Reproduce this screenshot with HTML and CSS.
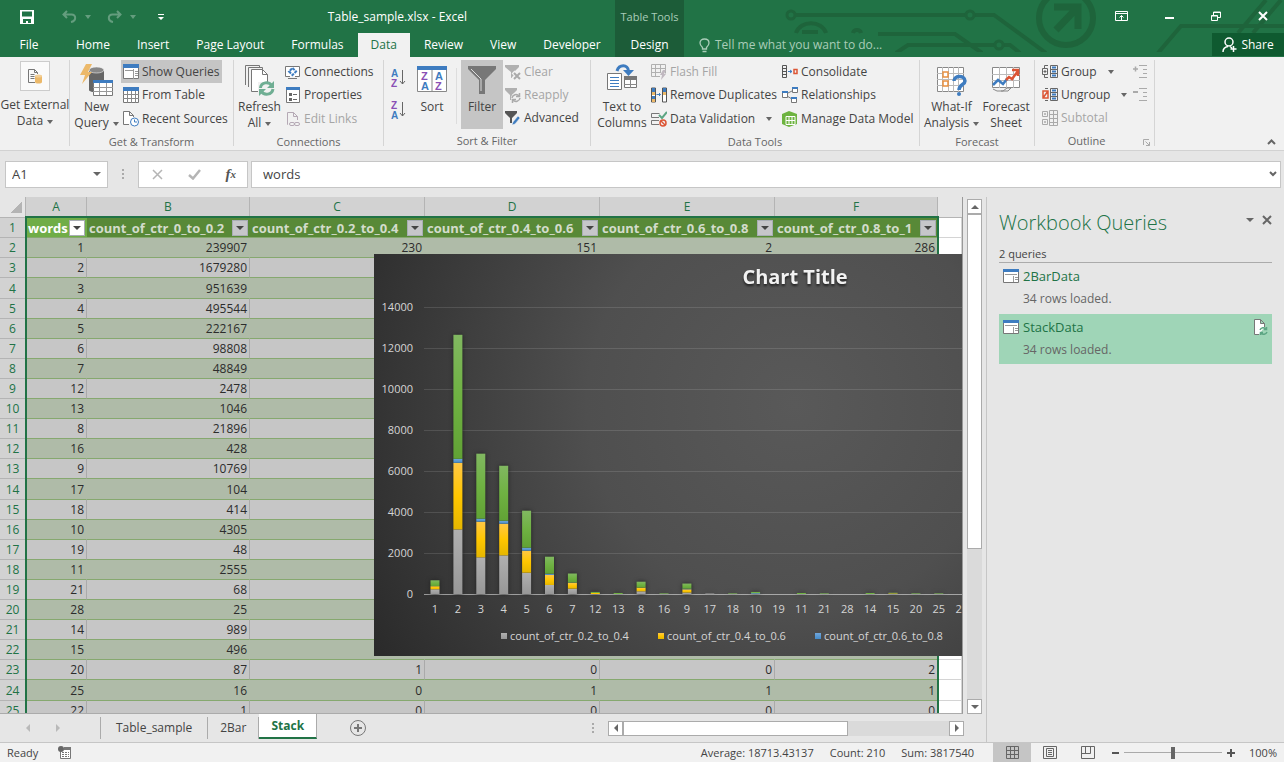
FILE: index.html
```html
<!DOCTYPE html>
<html lang="en">
<head>
    <meta charset="UTF-8">
    <meta name="viewport" content="width=device-width, initial-scale=1.0">
    <title>Table_sample.xlsx - Excel</title>
    <link rel="stylesheet" href="styles.css">
</head>
<body>
    <header class="titlebar">
        <svg class="circuit" width="500" height="52" viewBox="784 0 500 52" fill="none" stroke="#1e643b" stroke-width="4">
            <circle cx="791" cy="15" r="4" stroke-width="3"/>
            <path d="M795 15H966M974 15H994L1046 53M878 34H955L982 53M896 53L908 45H995M1003 45H1010L1020 53M1158 53L1181 26H1284M1238 33L1266 0M1253 33L1281 0"/>
            <path d="M796 33C800 20 822 20 826 33M802 32H818M853 33C854 29 860 29 861 33"/>
            <circle cx="970" cy="15" r="4" stroke-width="3"/>
            <circle cx="999" cy="45" r="4" stroke-width="3"/>
            <circle cx="1066" cy="18" r="27" stroke-width="6"/>
            <path d="M1054 7H1078V29M1077 8L1056 30" stroke-width="7"/>
        </svg>
        <div class="title-left">
            <div class="title-row">
                <div class="quick-access">
                    <button aria-label="Save"><svg width="14" height="14" viewBox="0 0 14 14"><path d="M0 0h14v14H0z" fill="#fff"/><path d="M2 1.500h10v5H2zM3 9h8v4H8v-2H6v2H3z" fill="#217346"/></svg></button>
                    <button class="faded" aria-label="Undo"><svg width="15" height="13" viewBox="0 0 15 13" fill="none" stroke="#fff" stroke-width="2"><path d="M5 1L1.500 4.500L5 8M2 4.500H9.500C14.500 4.500 14.500 11 9 12"/></svg><span class="caret"></span></button>
                    <button class="faded" aria-label="Redo"><svg width="15" height="13" viewBox="0 0 15 13" fill="none" stroke="#fff" stroke-width="2"><path d="M10 1L13.500 4.500L10 8M13 4.500H5.500C.5 4.500 .5 11 6 12"/></svg><span class="caret"></span></button>
                    <button aria-label="Customize toolbar"><svg width="6" height="6" viewBox="0 0 6 6"><path d="M0 0h6v1H0zM0 3h6L3 6z" fill="#fff"/></svg></button>
                </div>
                <div class="doc-title">Table_sample.xlsx - Excel</div>
            </div>
            <nav class="tabs">
                <button class="file">File</button>
                <button>Home</button>
                <button>Insert</button>
                <button>Page Layout</button>
                <button>Formulas</button>
                <button class="active">Data</button>
                <button>Review</button>
                <button>View</button>
                <button>Developer</button>
            </nav>
        </div>
        <div class="context">
            <div class="context-name">Table Tools</div>
            <button>Design</button>
        </div>
        <div class="title-right">
            <div class="window-buttons">
                <button aria-label="Ribbon display options"><svg width="13" height="10" viewBox="0 0 13 10" fill="none" stroke="#fff"><path d="M.5 .5h12v9H.5zM1 2.500h11M6.500 9V4.500M4.500 6.500l2-2 2 2"/></svg></button>
                <button aria-label="Minimize"><svg width="9" height="10" viewBox="0 0 9 10"><path d="M0 6h9v2H0z" fill="#fff"/></svg></button>
                <button aria-label="Restore"><svg width="10" height="10" viewBox="0 0 10 10" fill="none" stroke="#fff"><path d="M.5 4.500h6v5h-6zM.5 5h6M2.500 4V1h7v5.500H7M2.500 1.500h7"/></svg></button>
                <button aria-label="Close"><svg width="10" height="10" viewBox="0 0 10 10" stroke="#fff" stroke-width="2"><path d="M1 1l8 8M9 1L1 9"/></svg></button>
            </div>
            <div class="tell-row">
                <button class="tell"><svg width="11" height="15" viewBox="0 0 11 15" fill="none" stroke="#a9cdb8" stroke-width="1.300"><path d="M3.500 11V9.500C2 8 1 7 1 5C1 2.500 3 1 5.500 1S10 2.500 10 5C10 7 9 8 7.500 9.500V11zM3.500 13.500h4"/></svg>Tell me what you want to do...</button>
                <button class="share"><svg width="15" height="16" viewBox="0 0 15 16" fill="none" stroke="#fff" stroke-width="1.500"><circle cx="7" cy="5" r="4"/><path d="M1 15C1 11.500 3 10 6 9.500M8 9.500L10 11M11.500 9v6M8.500 12h6"/></svg>Share</button>
            </div>
        </div>
    </header>

    <section class="ribbon">
        <div class="group external">
            <div class="controls">
                <button class="big">
                    <span class="framed"><svg width="16" height="16" viewBox="0 0 16 16" fill="none" stroke="#777"><path d="M8 14.500H1.500v-13h6l3 3V6M7.500 1.500v3h3M3.500 6.500h4M3.500 8.500h4M3.500 10.500h4"/><path d="M8 8v6c0 2 7 2 7 0V8" fill="#ecb96a" stroke="none"/><ellipse cx="11.500" cy="8" rx="3.500" ry="1.500" fill="#f3cf96" stroke="none"/></svg></span>
                    <span>Get External<br>Data<i class="caret"></i></span>
                </button>
            </div>
            <div class="group-name"></div>
        </div>
        <div class="group transform">
            <div class="controls">
                <button class="big">
                    <svg width="34" height="34" viewBox="0 0 34 34"><path d="M9 8v19c0 3 15 3 15 0V8z" fill="#666"/><ellipse cx="16.500" cy="7" rx="7.500" ry="3" fill="#888" stroke="#f1f1f1" stroke-width=".6"/><path d="M6 1h6L8 9h4L2 21l3-9H0z" fill="#ecb96a"/><path d="M13.500 17.500h19v15h-19z" fill="#fff" stroke="#777"/><path d="M13 17h20v3H13z" fill="#3e7cc0"/><path d="M13 24.500h20M13 28.500h20M19.500 20v12M26.500 20v12" stroke="#999"/></svg>
                    <span>New<br>Query<i class="caret"></i></span>
                </button>
                <div class="stack">
                    <button class="small on"><svg width="16" height="16" viewBox="0 0 16 16"><path d="M.5 .5h15v14H.5z" fill="#fff" stroke="#777"/><path d="M0 0h16v4H0z" fill="#3e7cc0"/><path d="M2 6.500h8M10.500 5v10M12 7.500h3M12 9.500h3M12 11.500h3" stroke="#999"/></svg>Show Queries</button>
                    <button class="small"><svg width="16" height="16" viewBox="0 0 16 16"><path d="M.5 .5h15v15H.5z" fill="#fff" stroke="#777"/><path d="M0 0h16v4H0z" fill="#3e7cc0"/><path d="M0 7.500h16M0 11.500h16M4.500 4v12M8.500 4v12M12.500 4v12" stroke="#888"/></svg>From Table</button>
                    <button class="small"><svg width="16" height="16" viewBox="0 0 16 16" fill="none" stroke="#777"><path d="M6 13.500H.5V.5h6l4 4V6M6.500 .5v4h4" fill="#fff"/><circle cx="11.500" cy="11" r="4" fill="#fff" stroke="#3e7cc0"/><path d="M11.500 8.500V11H14" stroke="#3e7cc0"/></svg>Recent Sources</button>
                </div>
            </div>
            <div class="group-name">Get &amp; Transform</div>
        </div>
        <div class="group connections">
            <div class="controls">
                <button class="big">
                    <svg width="30" height="34" viewBox="0 0 30 34" fill="#fff" stroke="#777"><path d="M.5 22V2.500h14V5M3.500 24V4.500h14V7" fill="none"/><path d="M6.500 6.500h11l5 5V28.500h-16z"/><path d="M17.500 6.500v5h5" fill="none"/><path d="M13 19h16v14H13z" fill="#f1f1f1" stroke="none"/><path d="M15.500 25C16 19 24 18 27 23M28 26C27 32 19 33 16 28" fill="none" stroke="#6fae93" stroke-width="3"/><path d="M29 18v7h-7zM14 33v-7h7z" fill="#6fae93" stroke="none"/></svg>
                    <span>Refresh<br>All<i class="caret"></i></span>
                </button>
                <div class="stack">
                    <button class="small"><svg width="16" height="16" viewBox="0 0 16 16" fill="none" stroke="#777"><path d="M5 12.500H.5v-10h14v10H10M3 14.500h9" fill="#fff"/><path d="M7.500 4l3.500 3.500L7.500 11 4 7.500z" stroke="#3e7cc0" stroke-width="2" stroke-dasharray="3 1"/></svg>Connections</button>
                    <button class="small"><svg width="16" height="16" viewBox="0 0 16 16"><path d="M1.500 1.500h13v14h-13z" fill="#fff" stroke="#777"/><path d="M1 0h14v3H1z" fill="#3e7cc0"/><path d="M4 6h3v3H4zM4 11h3v3H4zM8 7h4v1H8zM8 12h4v1H8z" fill="#666"/></svg>Properties</button>
                    <button class="small" disabled><svg width="16" height="16" viewBox="0 0 16 16" fill="none" stroke="#b5a9b5"><path d="M3 13.500H2.500V1.500h6l4 4V9M8.500 1.500v4h4"/><rect x="4.500" y="11.500" width="5" height="3" rx="1.500"/><rect x="9.500" y="11.500" width="5" height="3" rx="1.500"/></svg>Edit Links</button>
                </div>
            </div>
            <div class="group-name">Connections</div>
        </div>
        <div class="group sortfilter">
            <div class="controls">
                <div class="az">
                    <button aria-label="Sort A to Z"><svg width="15" height="22" viewBox="0 0 15 22"><text x="0" y="10" fill="#3e7cc0">A</text><text x="0" y="20" fill="#8a4fb5">Z</text><path d="M11.500 3v14M9 14l2.500 3 2.500-3" fill="none" stroke="#666"/></svg></button>
                    <button aria-label="Sort Z to A"><svg width="15" height="22" viewBox="0 0 15 22"><text x="0" y="10" fill="#8a4fb5">Z</text><text x="0" y="20" fill="#3e7cc0">A</text><path d="M11.500 3v14M9 14l2.500 3 2.500-3" fill="none" stroke="#666"/></svg></button>
                </div>
                <button class="big sort">
                    <svg width="30" height="34" viewBox="0 0 30 34"><path d="M.5 4h29v24.500H.5z" fill="#fff" stroke="#888"/><path d="M0 3h30v4H0z" fill="#3e7cc0"/><path d="M15 7v21" stroke="#888"/><text x="4" y="17" fill="#8a4fb5">Z</text><text x="4" y="27" fill="#3e7cc0">A</text><text x="18" y="17" fill="#3e7cc0">A</text><text x="18" y="27" fill="#8a4fb5">Z</text></svg>
                    <span>Sort</span>
                </button>
                <div class="divider"></div>
                <button class="big filter on">
                    <svg width="28" height="34" viewBox="0 0 28 34"><path d="M0 3h28v3L17 17v14h-6V17L0 6z" fill="#777"/><path d="M3 6l10 10v12" fill="none" stroke="#ddd"/></svg>
                    <span>Filter</span>
                </button>
                <div class="stack">
                    <button class="small" disabled><svg width="16" height="16" viewBox="0 0 16 16"><path d="M0 1h14v2L9 8v6H6V8L0 3z" fill="#b0b0b0"/><path d="M8 8l7 7M15 8l-7 7" stroke="#f1f1f1" stroke-width="4"/><path d="M9 9l6 6M15 9l-6 6" stroke="#aaa" stroke-width="2"/></svg>Clear</button>
                    <button class="small" disabled><svg width="16" height="16" viewBox="0 0 16 16"><path d="M0 1h12v2L7 8v5H5V8L0 3z" fill="#b0b0b0"/><circle cx="11" cy="11" r="5" fill="#f1f1f1"/><path d="M7 11a4 4 0 0 1 7-2M15 11a4 4 0 0 1-7 2M14.500 6v3.500H11M7.500 16v-3.500H11" fill="none" stroke="#aaa" stroke-width="1.500"/></svg>Reapply</button>
                    <button class="small"><svg width="16" height="16" viewBox="0 0 16 16"><path d="M0 1h12v2L7 8v5H5V8L0 3z" fill="#555"/><path d="M7 15l1-3 5-6 2 2-5 6z" fill="#3e7cc0" stroke="#f1f1f1" stroke-width=".5"/></svg>Advanced</button>
                </div>
            </div>
            <div class="group-name">Sort &amp; Filter</div>
        </div>
        <div class="group datatools">
            <div class="controls">
                <button class="big columns">
                    <svg width="30" height="34" viewBox="0 0 30 34"><path d="M.5 10.500h14v16H.5z" fill="#fff" stroke="#777"/><path d="M3 14.500h9M3 17.500h9M3 20.500h9M3 23.500h9" stroke="#3e7cc0"/><path d="M17.500 15.500h12v9h-12z" fill="#fff" stroke="#777"/><path d="M17 13h13v4H17z" fill="#777"/><path d="M23.500 17v8M17 21.500h13" stroke="#888"/><path d="M10 8C12 1 21 1 21.500 8" fill="none" stroke="#3e7cc0" stroke-width="3"/><path d="M16 7h11l-5.500 6z" fill="#3e7cc0"/></svg>
                    <span>Text to<br>Columns</span>
                </button>
                <div class="stack wide">
                    <button class="small" disabled><svg width="16" height="16" viewBox="0 0 16 16" fill="none" stroke="#b0b0b0"><path d="M.5 .5h14v9M.5 .5v12H9M0 4.500h15M0 8.500h10M4.500 0v13M9.500 0v8"/><path d="M12 6h3l-2 4h2l-5 6 1-5H9z" fill="#c0b8c0" stroke="none"/></svg>Flash Fill</button>
                    <button class="small"><svg width="16" height="16" viewBox="0 0 16 16"><path d="M.5 1v14h4V1zM11.500 1v14h4V1z" fill="#fff" stroke="#555"/><path d="M1 1h3v4H1zM12 1h3v4h-3zM1 9h3v3H1z" fill="#3e7cc0"/><path d="M1 5h3v3H1zM12 5h3v3h-3zM1 12h3v3H1z" fill="#ecb96a"/><path d="M5.500 7.500h4M8 6l1.500 1.500L8 9" stroke="#3e7cc0" fill="none"/></svg>Remove Duplicates</button>
                    <button class="small"><svg width="16" height="16" viewBox="0 0 16 16" fill="none" stroke="#777"><path d="M8 6.500H.5v-4h8M8 13.500H.5v-4H8"/><path d="M8 4l3 3 5-6" stroke="#5ca583" stroke-width="2"/><circle cx="12" cy="12" r="3" stroke="#dc5535" stroke-width="1.500"/><path d="M10 10l4 4" stroke="#dc5535" stroke-width="1.500"/></svg>Data Validation<i class="caret far"></i></button>
                </div>
                <div class="stack">
                    <button class="small"><svg width="16" height="16" viewBox="0 0 16 16" fill="none"><path d="M.5 1.500h4v12h-4zM0 4.500h5M0 7.500h5M0 10.500h5" stroke="#555"/><path d="M6 7.500h4M8 6l2 1.500L8 9" stroke="#3e7cc0"/><path d="M12 5.500h3v4h-3z" stroke="#dc5535" stroke-width="1.500"/></svg>Consolidate</button>
                    <button class="small"><svg width="16" height="16" viewBox="0 0 16 16" fill="#fff" stroke="#777"><path d="M5 6.500L11 3.500M5 9l5 3" fill="none"/><path d="M.5 5.500h5v5h-5zM10.500 .5h5v5h-5zM9.500 10.500h5v5h-5z"/><path d="M0 4h6v2H0zM10 0h6v2h-6zM9 10h6v2H9z" fill="#3e7cc0" stroke="none"/></svg>Relationships</button>
                    <button class="small"><svg width="16" height="16" viewBox="0 0 16 16"><path d="M0 3l7-3 8 3v10l-8 3-7-3z" fill="#6db33f"/><path d="M4 5.500h9v8H4zM4 9.500h9M7 5v9M10 5v9" fill="none" stroke="#fff"/></svg>Manage Data Model</button>
                </div>
            </div>
            <div class="group-name">Data Tools</div>
        </div>
        <div class="group forecast">
            <div class="controls">
                <button class="big">
                    <svg width="30" height="34" viewBox="0 0 30 34"><path d="M.5 4.500h26v24H.5z" fill="#fff" stroke="#888"/><path d="M0 10.500h27M0 16.500h27M0 22.500h27M5.500 4v25M11.500 4v25M16.500 4v25M21.500 4v25" stroke="#bbb"/><path d="M6 9h5v5H6zM6 18h5v5H6z" fill="#fff" stroke="#e89040" stroke-width="1.500"/><path d="M17 18C17 12 28 12 28 18C28 22 22 21 22 27" fill="none" stroke="#3e7cc0" stroke-width="3.500"/><circle cx="22" cy="31" r="2" fill="#3e7cc0"/></svg>
                    <span>What-If<br>Analysis<i class="caret"></i></span>
                </button>
                <button class="big">
                    <svg width="30" height="34" viewBox="0 0 30 34" fill="none"><path d="M1.500 4.500h27v20h-27z" fill="#fff" stroke="#888"/><path d="M1 11.500h28M1 17.500h28M8.500 4v21M15.500 4v21M22.500 4v21" stroke="#bbb"/><path d="M2 26l4 2h6l4-3h4l-3 3h-7" stroke="#888"/><path d="M2 22l5-5 5 4 4-5" stroke="#3e7cc0" stroke-width="2.500"/><path d="M15 17l3-3 3 2 6-8M21 7h6v6" stroke="#dc5535" stroke-width="2.500"/></svg>
                    <span>Forecast<br>Sheet</span>
                </button>
            </div>
            <div class="group-name">Forecast</div>
        </div>
        <div class="group outline">
            <div class="controls">
                <div class="stack">
                    <button class="small"><svg width="16" height="16" viewBox="0 0 16 16" fill="none" stroke="#666"><path d="M6 1.500H2.500V4M6 13.500H2.500V11M.5 4.500h5v6h-5zM1.500 7.500h3M3 6v3M8.500 1.500h7v12h-7z"/><path d="M10 3.500h4M10 7.500h4M10 11.500h4" stroke="#3e7cc0" stroke-width="2"/><path d="M8 5.500h8M8 9.500h8"/></svg>Group<i class="caret far"></i></button>
                    <button class="small"><svg width="16" height="16" viewBox="0 0 16 16" fill="none" stroke="#666"><path d="M3 1.500h3M3 13.500h3M8.500 1.500h7v12h-7z"/><path d="M1 4h5v7H1zM1 11l5-7" stroke="#dc5535" stroke-width="1.500"/><path d="M10 3.500h4M10 7.500h4M10 11.500h4" stroke="#3e7cc0" stroke-width="2"/><path d="M8 5.500h8M8 9.500h8"/></svg>Ungroup<i class="caret far"></i></button>
                    <button class="small" disabled><svg width="16" height="16" viewBox="0 0 16 16" fill="none" stroke="#aaa"><path d="M.5 1.500h5v5h-5zM.5 9.500h5v5h-5zM2 4h2M3 3v2M2 12h2M3 11v2M7.500 .5h8v15h-8zM7 4.500h9M7 8.500h9M7 12.500h9M11.500 0v16"/></svg>Subtotal</button>
                </div>
                <div class="stack details">
                    <button class="small" disabled aria-label="Show Detail"><svg width="16" height="16" viewBox="0 0 16 16" stroke="#aaa"><path d="M1 5h5M3.500 2.500v5" stroke-width="1.500"/><path d="M7 1.500h8M11 5.500h4M11 9.500h4M7 13.500h8"/></svg></button>
                    <button class="small" disabled aria-label="Hide Detail"><svg width="16" height="16" viewBox="0 0 16 16" stroke="#aaa"><path d="M1 5h5" stroke-width="2"/><path d="M7 1.500h8M11 5.500h4M11 9.500h4M7 13.500h8"/></svg></button>
                </div>
            </div>
            <div class="group-name">Outline<button class="launcher" aria-label="Outline settings"><svg width="7" height="7" viewBox="0 0 7 7" fill="none" stroke="#aaa"><path d="M.5 6V.5H6M2.500 2.500l4 4M6.500 3v3.500H3"/></svg></button></div>
        </div>
        <button class="collapse" aria-label="Collapse the ribbon"><svg width="9" height="6" viewBox="0 0 9 6" fill="none" stroke="#666" stroke-width="2"><path d="M1 5l3.500-3.500L8 5"/></svg></button>
    </section>

    <section class="formula-bar">
        <div class="name-box"><input type="text" value="A1" aria-label="Name box"><button aria-label="Names"><i class="caret"></i></button></div>
        <span class="grip"></span>
        <div class="formula-buttons">
            <button aria-label="Cancel"><svg width="11" height="11" viewBox="0 0 11 11" stroke="#b5b5b5" stroke-width="1.500"><path d="M1 1l9 9M10 1l-9 9"/></svg></button>
            <button aria-label="Enter"><svg width="13" height="11" viewBox="0 0 13 11" fill="none" stroke="#b5b5b5" stroke-width="2.500"><path d="M1 6l4 3.500L12 1"/></svg></button>
            <button class="fx" aria-label="Insert function">f<sub>x</sub></button>
        </div>
        <div class="formula"><input type="text" value="words" aria-label="Formula"><button aria-label="Expand"><svg width="8" height="6" viewBox="0 0 8 6" fill="none" stroke="#666" stroke-width="2"><path d="M1 1l3 3 3-3"/></svg></button></div>
    </section>

    <main class="workspace">
        <div class="book">
            <div class="sheet-area">
                <div class="sheet">
                    <table class="grid">
                        <colgroup><col class="c-row"><col class="c-a"><col class="c-b"><col class="c-c"><col class="c-c"><col class="c-c"><col class="c-b"><col></colgroup>
                        <thead>
                            <tr><th class="corner"></th><th>A</th><th>B</th><th>C</th><th>D</th><th>E</th><th>F</th><th class="rest"></th></tr>
                        </thead>
                        <tbody id="rows"></tbody>
                    </table>
                    <div class="selection"></div>
                    <svg class="chart" id="chart" width="842" height="402" viewBox="0 0 842 402">
                        <defs>
                            <radialGradient id="back" gradientUnits="userSpaceOnUse" cx="421" cy="150" r="520">
                                <stop offset="0" stop-color="#595959"/>
                                <stop offset="0.4" stop-color="#4f4f4f"/>
                                <stop offset="1" stop-color="#262626"/>
                            </radialGradient>
                            <linearGradient id="s0" x2="0" y2="1"><stop stop-color="#b0b0b0"/><stop offset="1" stop-color="#979797"/></linearGradient>
                            <linearGradient id="s1" x2="0" y2="1"><stop stop-color="#ffc746"/><stop offset=".5" stop-color="#ffc600"/><stop offset="1" stop-color="#e5b600"/></linearGradient>
                            <linearGradient id="s2" x2="0" y2="1"><stop stop-color="#71a6db"/><stop offset="1" stop-color="#438ac9"/></linearGradient>
                            <linearGradient id="s3" x2="0" y2="1"><stop stop-color="#81b861"/><stop offset=".5" stop-color="#6fb242"/><stop offset="1" stop-color="#61a235"/></linearGradient>
                        </defs>
                        <rect width="842" height="402" fill="url(#back)"/>
                        <text class="chart-title" x="421" y="30">Chart Title</text>
                    </svg>
                </div>
                <div class="vscroll">
                    <button aria-label="Scroll up"><i class="up"></i></button>
                    <div class="track"><div class="thumb"></div></div>
                    <button aria-label="Scroll down"><i class="down"></i></button>
                </div>
            </div>
            <div class="sheet-tabs">
                <div class="tab-nav"><button aria-label="Previous sheet"><i class="left"></i></button><button aria-label="Next sheet"><i class="right"></i></button></div>
                <button class="sheet-tab first">Table_sample</button>
                <button class="sheet-tab">2Bar</button>
                <button class="sheet-tab current">Stack</button>
                <button class="add" aria-label="New sheet"><svg width="16" height="16" viewBox="0 0 16 16" fill="none" stroke="#777"><circle cx="8" cy="8" r="7.500"/><path d="M4 8h8M8 4v8" stroke-width="2"/></svg></button>
                <span class="grip"></span>
                <div class="hscroll">
                    <button aria-label="Scroll left"><i class="left"></i></button>
                    <div class="track"><div class="thumb"></div></div>
                    <button aria-label="Scroll right"><i class="right"></i></button>
                </div>
            </div>
        </div>
        <aside class="queries">
            <div class="pane-head">
                <h2>Workbook Queries</h2>
                <button aria-label="Pane options"><i class="caret"></i></button>
                <button aria-label="Close pane"><svg width="10" height="10" viewBox="0 0 10 10" stroke="#666" stroke-width="2"><path d="M1 1l8 8M9 1L1 9"/></svg></button>
            </div>
            <div class="count">2 queries</div>
            <div class="query">
                <svg width="16" height="16" viewBox="0 0 16 16"><path d="M.5 1.500h15v13H.5z" fill="#fff" stroke="#777"/><path d="M0 1h16v3H0z" fill="#3e7cc0"/><path d="M2 6.500h12M10.500 8v6M12 9.500h3M12 11.500h3" stroke="#999"/></svg>
                <div><a href="#">2BarData</a><p>34 rows loaded.</p></div>
            </div>
            <div class="query chosen">
                <svg width="16" height="16" viewBox="0 0 16 16"><path d="M.5 1.500h15v13H.5z" fill="#fff" stroke="#777"/><path d="M0 1h16v3H0z" fill="#3e7cc0"/><path d="M2 6.500h12M10.500 8v6M12 9.500h3M12 11.500h3" stroke="#999"/></svg>
                <div><a href="#">StackData</a><p>34 rows loaded.</p></div>
                <button aria-label="Refresh"><svg width="15" height="17" viewBox="0 0 15 17" fill="none" stroke="#777"><path d="M6 15.500H1.500V.5h6l4 4V8M7.500 .5v4h4" fill="#fff"/><path d="M7 11a3.500 3.500 0 0 1 6-1M14 13a3.500 3.500 0 0 1-6 1M13.500 8v2.500H11M7.500 16v-2.500H10" stroke="#5ca583" stroke-width="1.500"/></svg></button>
            </div>
        </aside>
    </main>

    <footer class="status">
        <span>Ready</span>
        <svg class="macro" width="14" height="13" viewBox="0 0 14 13"><path d="M2.500 5v7.500h10v-10H6" fill="#fff" stroke="#777"/><path d="M6 1h7v3H6z" fill="#777"/><circle cx="3" cy="3" r="3" fill="#666"/><path d="M4 6.500h7M4 8.500h7M4 10.500h7" stroke="#777" stroke-dasharray="2 1"/></svg>
        <span class="sums"><span>Average: 18713.43137</span><span>Count: 210</span><span>Sum: 3817540</span></span>
        <button class="view on" aria-label="Normal"><svg width="13" height="13" viewBox="0 0 13 13" fill="none" stroke="#666"><path d="M.5 .5h12v12H.5zM0 4.500h13M0 8.500h13M4.500 0v13M8.500 0v13"/></svg></button>
        <button class="view" aria-label="Page layout"><svg width="14" height="13" viewBox="0 0 14 13" fill="none" stroke="#666"><path d="M.5 .5h13v12H.5zM3.500 2.500h7v8h-7zM5 4.500h4M5 6.500h4M5 8.500h4"/></svg></button>
        <button class="view" aria-label="Page break"><svg width="14" height="13" viewBox="0 0 14 13" fill="none" stroke="#666"><path d="M.5 .5h13v12H.5zM4.500 1v6.500h5V1M1 7.500h4" /></svg></button>
        <button class="zoom" aria-label="Zoom out"><svg width="7" height="7" viewBox="0 0 7 7"><path d="M0 3h7v2H0z" fill="#555"/></svg></button>
        <input type="range" min="0" max="100" value="50" aria-label="Zoom">
        <button class="zoom" aria-label="Zoom in"><svg width="8" height="8" viewBox="0 0 8 8"><path d="M0 3h8v2H0zM3 0h2v8H3z" fill="#555"/></svg></button>
        <span class="percent">100%</span>
    </footer>
    <script src="script.js"></script>
</body>
</html>
```
FILE: styles.css
```css
* {
    box-sizing: border-box;
}
body {
    margin: 0;
    height: 100vh;
    display: flex;
    flex-direction: column;
    overflow: hidden;
    background-color: #e6e6e6;
    color: #444;
    font-family: 'Open Sans', 'Noto Sans', sans-serif;
    font-size: 12px;
    line-height: 16px;
    white-space: nowrap;
}
button {
    display: flex;
    align-items: center;
    justify-content: center;
    border: none;
    background: none;
    padding: 0;
    margin: 0;
    font: inherit;
    color: inherit;
}
svg {
    display: block;
    flex: none;
}
.caret {
    display: inline-block;
    border: 3px solid transparent;
    border-top: 4px solid #666;
    border-bottom: none;
    margin-left: 4px;
    vertical-align: middle;
}
.caret.far {
    margin-left: 8px;
}

/* title bar and tabs */
.titlebar {
    position: relative;
    flex: none;
    display: flex;
    height: 57px;
    background-color: #217346;
    color: #fff;
}
.circuit {
    position: absolute;
    top: 0;
    right: 0;
}
.title-left {
    width: 615px;
}
.title-row {
    display: flex;
    align-items: center;
    height: 33px;
}
.quick-access {
    display: flex;
    align-items: center;
    gap: 16px;
    height: 28px;
    padding-left: 20px;
}
.quick-access button:nth-child(2) {
    margin-left: 12px;
}
.quick-access button:last-child {
    margin-left: 6px;
}
.quick-access .caret {
    margin-left: 8px;
    border-top-color: #fff;
}
.faded {
    opacity: 0.3;
}
.doc-title {
    flex: 1;
    padding-left: 16px;
    text-align: center;
}
.tabs {
    display: flex;
    gap: 1px;
    height: 24px;
}
.tabs button {
    padding: 0 13px;
}
.tabs .file {
    width: 62px;
    padding: 0 4px 0 0;
}
.tabs .active {
    background-color: #f1f1f1;
    color: #217346;
}
.context {
    width: 69px;
    background-color: #1c5c38;
}
.context-name {
    height: 33px;
    padding-top: 9px;
    font-size: 11px;
    text-align: center;
    color: #a9cdb8;
}
.context button {
    width: 100%;
    height: 24px;
}
.title-right {
    position: relative;
    flex: 1;
}
.window-buttons {
    display: flex;
    justify-content: flex-end;
    align-items: center;
    height: 33px;
    padding: 0 16px 2px 0;
    gap: 37px;
}
.tell-row {
    display: flex;
    justify-content: space-between;
    height: 24px;
}
.tell {
    gap: 5px;
    padding-left: 15px;
    color: #a9cdb8;
}
.share {
    width: 72px;
    gap: 4px;
    height: 23px;
    background-color: #0f5a30;
}

/* ribbon */
.ribbon {
    flex: none;
    display: flex;
    height: 94px;
    padding-top: 3px;
    background-color: #f1f1f1;
    border-bottom: 1px solid #d2d2d2;
}
.group {
    flex: none;
    display: flex;
    flex-direction: column;
    height: 86px;
    border-right: 1px solid #d5d5d5;
}
.external {
    width: 70px;
}
.transform {
    width: 164px;
}
.connections {
    width: 150px;
}
.sortfilter {
    width: 207px;
}
.datatools {
    width: 329px;
}
.forecast {
    width: 115px;
}
.outline {
    width: 120px;
}
.controls {
    display: flex;
    height: 70px;
}
.group-name {
    position: relative;
    margin-top: 4px;
    height: 16px;
    font-size: 11px;
    text-align: center;
    color: #666;
}
.outline .group-name {
    padding-right: 16px;
}
.launcher {
    position: absolute;
    right: 4px;
    top: 6px;
}
.big {
    flex-direction: column;
    justify-content: flex-start;
    min-width: 49px;
    margin-left: 2px;
    padding-top: 3px;
    gap: 2px;
}
.big text {
    font-family: 'Liberation Sans', sans-serif;
    font-weight: bold;
    font-size: 11px;
}
.external .big {
    width: 66px;
    padding-top: 1px;
    gap: 6px;
}
.connections .big {
    min-width: 47px;
}
.framed {
    display: flex;
    align-items: center;
    justify-content: center;
    width: 30px;
    height: 30px;
    border: 1px solid #ccc;
    background-color: #fafafa;
}
.on {
    background-color: #c5c5c5;
}
.az {
    display: flex;
    flex-direction: column;
    justify-content: space-between;
    width: 24px;
    padding: 7px 0 8px;
}
.az text {
    font-family: 'Liberation Sans', sans-serif;
    font-weight: bold;
    font-size: 10px;
}
.big.sort {
    min-width: 32px;
    margin-left: 6px;
}
.big.filter {
    min-width: 42px;
    margin: 0;
}
.sortfilter .controls {
    padding-left: 2px;
}
.divider {
    width: 1px;
    height: 56px;
    margin: 8px 4px 0 8px;
    background-color: #ddd;
}
.stack {
    display: flex;
    flex-direction: column;
    justify-content: space-between;
    align-items: flex-start;
}
.stack.details {
    justify-content: flex-start;
}
.stack.wide {
    width: 131px;
}
.small {
    height: 23px;
    padding: 0 3px 0 2px;
    gap: 3px;
}
.small:disabled {
    color: #a5a5a5;
}
.big.columns {
    width: 54px;
    margin-left: 4px;
}
.forecast .controls {
    padding-left: 4px;
}
.forecast .big {
    min-width: 54px;
    margin: 0;
}
.outline .controls {
    justify-content: space-between;
    padding: 0 4px 0 5px;
}
.collapse {
    align-self: flex-end;
    margin: 0 8px 5px auto;
}

/* formula bar */
.formula-bar {
    flex: none;
    display: flex;
    align-items: center;
    height: 46px;
    padding: 0 3px 0 5px;
}
.formula-bar input {
    min-width: 0;
    flex: 1;
    border: none;
    outline: none;
    background: none;
    padding: 0;
    font: inherit;
    font-size: 13px;
    color: #444;
}
.name-box, .formula-buttons, .formula {
    display: flex;
    height: 27px;
    border: 1px solid #c6c6c6;
    background-color: #fff;
}
.name-box {
    width: 103px;
    padding: 0 6px;
}
.name-box .caret {
    border-width: 4px 4px 0;
}
.grip {
    width: 2px;
    height: 10px;
    margin: 0 14px;
    background: repeating-linear-gradient(#aaa 0 2px, transparent 2px 4px);
}
.formula-buttons {
    width: 110px;
    margin-right: 3px;
    align-items: center;
    justify-content: space-between;
    padding: 0 11px 0 13px;
}
.fx {
    font-family: 'Liberation Serif', serif;
    font-style: italic;
    font-weight: bold;
    font-size: 15px;
    color: #555;
}
.fx sub {
    font-size: 11px;
}
.formula {
    flex: 1;
    padding: 0 3px 0 11px;
}

/* sheet */
.workspace {
    flex: 1;
    display: flex;
    min-height: 0;
}
.book {
    flex: 1;
    min-width: 0;
    display: flex;
    flex-direction: column;
}
.sheet-area {
    flex: 1;
    display: flex;
    min-height: 0;
}
.sheet {
    position: relative;
    flex: 1;
    min-width: 0;
    overflow: hidden;
    border-right: 1px solid #999;
    border-bottom: 1px solid #ababab;
}
.grid {
    width: 100%;
    table-layout: fixed;
    border-spacing: 0;
    line-height: 18px;
    color: #2c2c2c;
}
.c-row {
    width: 26px;
}
.c-a {
    width: 61px;
}
.c-b {
    width: 163px;
}
.c-c {
    width: 175px;
}
.grid th, .grid td {
    height: 20px;
    padding: 1px 2px 0 0;
    border-right: 1px solid #aaa;
    border-bottom: 1px solid #86a86f;
    text-align: right;
    overflow: hidden;
}
.grid tbody tr:nth-child(10n+4) td {
    height: 21px;
}
.grid thead th {
    height: 21px;
    padding: 0;
    background-color: #d2d2d2;
    border-color: #b4b4b4;
    text-align: center;
    font-weight: normal;
    color: #217346;
}
.grid thead .corner {
    background: #e6e6e6 linear-gradient(135deg, transparent 50%, #b4b4b4 50%) 10px 4px / 12px 12px no-repeat;
}
.grid thead .rest {
    background-color: #e6e6e6;
    border-right: none;
}
.grid tbody td {
    background-color: #c6c6c6;
}
.grid tbody tr:nth-child(even) td {
    background-color: #afbba8;
    border-right-color: transparent;
}
.grid tbody tr .row-no, .grid tbody tr:nth-child(even) .row-no {
    background-color: #d2d2d2;
    border-color: #b4b4b4;
    padding-right: 0;
    text-align: center;
    color: #217346;
    font-weight: normal;
}
.grid tbody tr td.rest, .grid tbody tr:nth-child(even) td.rest {
    background-color: #fff;
    border-color: #d4d4d4;
}
.grid tbody .field {
    padding: 0;
    background-color: #588937;
    font-size: 13px;
    color: #d3dccc;
    border-right: none;
}
.grid tbody .field.first {
    background-color: #70ad47;
    color: #fff;
}
.field div {
    display: flex;
    align-items: center;
    justify-content: space-between;
    height: 18px;
    padding: 0 2px;
}
.field button {
    flex: none;
    width: 16px;
    height: 16px;
    border: 1px solid #a9adb5;
    background-color: #c6c6ca;
}
.field.first button {
    background-color: #fff;
}
.field .caret {
    margin: 0;
    border-width: 4px 4px 0;
    border-top-color: #444;
}
.selection {
    position: absolute;
    left: 25px;
    top: 19px;
    width: 914px;
    height: 100%;
    border: 2px solid #217346;
    border-bottom: none;
}
.chart {
    position: absolute;
    left: 374px;
    top: 57px;
    font-size: 11px;
    fill: #d5d5d5;
}
.chart-title {
    font-size: 20px;
    font-weight: bold;
    text-anchor: middle;
    fill: #f2f2f2;
    filter: drop-shadow(0 2px 1px #222);
}
.chart .bar {
    filter: drop-shadow(0 0 2px #222);
}
.axis-y {
    text-anchor: end;
}
.axis-x {
    text-anchor: middle;
}

/* scrollbars */
.up, .down, .left, .right {
    border: 4px solid transparent;
}
.up {
    border-bottom-color: #666;
    border-top: none;
}
.down {
    border-top-color: #666;
    border-bottom: none;
}
.left {
    border-right-color: #666;
    border-left: none;
}
.right {
    border-left-color: #666;
    border-right: none;
}
.vscroll {
    display: flex;
    flex-direction: column;
    width: 15px;
    margin: 2px 4px 0;
}
.vscroll button, .hscroll button {
    flex: none;
    width: 15px;
    height: 15px;
    border: 1px solid #ababab;
    background-color: #fff;
}
.track {
    flex: 1;
    background-color: #dadada;
}
.thumb {
    border: 1px solid #ababab;
    background-color: #fff;
}
.vscroll .thumb {
    height: 69%;
}
.hscroll {
    display: flex;
    width: 356px;
    height: 15px;
}
.hscroll .thumb {
    width: 69%;
    height: 15px;
}

/* sheet tabs */
.sheet-tabs {
    flex: none;
    display: flex;
    align-items: center;
    height: 28px;
    padding-right: 22px;
}
.tab-nav {
    display: flex;
    justify-content: space-between;
    width: 100px;
    padding: 0 40px 0 26px;
    opacity: 0.35;
}
.sheet-tab {
    height: 22px;
    padding: 0 12px;
    border-right: 1px solid #ababab;
}
.sheet-tab.first {
    padding: 0 15px;
    border-left: 1px solid #ababab;
}
.sheet-tab.current {
    align-self: flex-start;
    height: 25px;
    background-color: #fff;
    border-bottom: 2px solid #217346;
    color: #217346;
    font-weight: bold;
}
.add {
    margin: 0 auto 0 33px;
}

/* queries pane */
.queries {
    width: 298px;
    padding: 13px 12px 0 12px;
    border-left: 1px solid #c6c6c6;
}
.pane-head {
    display: flex;
    align-items: flex-start;
    gap: 8px;
}
.pane-head h2 {
    flex: 1;
    margin: 0;
    font-size: 20px;
    font-weight: 300;
    line-height: 26px;
    color: #217346;
}
.pane-head .caret {
    border-width: 4px 4px 0;
}
.pane-head button {
    height: 20px;
}
.count {
    margin-top: 10px;
    border-bottom: 1px solid #ababab;
    font-size: 11px;
}
.query {
    display: flex;
    gap: 4px;
    height: 50px;
    padding: 5px 4px 0;
    color: #666;
}
.query div {
    flex: 1;
}
.query a {
    display: block;
    font-size: 13px;
    color: #217346;
    text-decoration: none;
}
.query p {
    margin: 7px 0 0;
}
.query button {
    align-self: flex-start;
}
.query.chosen {
    margin-top: 1px;
    background-color: #9fd5b7;
}

/* status bar */
.status {
    flex: none;
    display: flex;
    align-items: center;
    height: 20px;
    padding: 0 7px;
    border-top: 1px solid #c6c6c6;
    background-color: #f1f1f1;
    font-size: 11px;
}
.macro {
    margin-left: 20px;
}
.sums {
    display: flex;
    gap: 16px;
    margin: 0 19px 0 auto;
}
.view {
    width: 38px;
    height: 20px;
}
.zoom {
    width: 16px;
}
.status input {
    appearance: none;
    width: 98px;
    height: 11px;
    margin: 0 1px;
    background: linear-gradient(#aaa, #aaa) center / 100% 1px no-repeat;
}
.status input::-webkit-slider-thumb {
    appearance: none;
    width: 4px;
    height: 12px;
    background-color: #666;
}
.percent {
    margin-left: 10px;
}
```
FILE: script.js
```javascript
const fields = ['words', 'count_of_ctr_0_to_0.2', 'count_of_ctr_0.2_to_0.4', 'count_of_ctr_0.4_to_0.6', 'count_of_ctr_0.6_to_0.8', 'count_of_ctr_0.8_to_1'];

const data = [
    [1, 239907, 230, 151, 2, 286], [2, 1679280], [3, 951639], [4, 495544], [5, 222167],
    [6, 98808], [7, 48849], [12, 2478], [13, 1046], [8, 21896], [16, 428], [9, 10769],
    [17, 104], [18, 414], [10, 4305], [19, 48], [11, 2555], [21, 68], [28, 25], [14, 989],
    [15, 496], [20, 87, 1, 0, 0, 2], [25, 16, 0, 1, 1, 1], [22, 1, 0, 0, 0, 0]
];

// header row with filter buttons, then the data rows
let html = '<tr><td class="row-no">1</td>';
fields.forEach((name, i) => {
    html += `<th class="field ${i === 0 ? 'first' : ''}"><div>${name}<button aria-label="Filter ${name}"><i class="caret"></i></button></div></th>`;
});
html += '<td class="rest"></td></tr>';
data.forEach((row, i) => {
    html += `<tr><td class="row-no">${i + 2}</td>`;
    for (let c = 0; c < 6; c++) {
        html += `<td>${row[c] === undefined ? '' : row[c]}</td>`;
    }
    html += '<td class="rest"></td></tr>';
});
document.getElementById('rows').innerHTML = html;

// stacked values: 0.2-0.4, 0.4-0.6, 0.6-0.8, 0.8-1
const bars = {
    1: [230, 151, 2, 286], 2: [3150, 3250, 195, 6050], 3: [1790, 1740, 146, 3170],
    4: [1885, 1545, 146, 2680], 5: [1040, 1073, 146, 1805], 6: [440, 490, 60, 830],
    7: [260, 290, 10, 440], 12: [0, 50, 0, 50], 13: [0, 0, 0, 50], 8: [130, 180, 0, 290],
    16: [0, 0, 0, 30], 9: [70, 160, 30, 250], 17: [20, 0, 0, 0], 18: [0, 0, 0, 30],
    10: [0, 0, 40, 60], 11: [0, 0, 0, 50], 21: [0, 0, 0, 30], 14: [0, 0, 0, 50],
    15: [0, 30, 0, 30], 20: [0, 0, 0, 30], 25: [0, 0, 0, 30]
};
const base = 340;
const scale = 41 / 2000;

let chart = '';
for (let v = 0; v <= 14000; v += 2000) {
    const y = Math.round(base - v * scale);
    chart += `<path d="M50 ${y}.5H820" stroke="#fff" stroke-opacity="${v ? 0.12 : 0.5}"/>`;
    chart += `<text class="axis-y" x="39" y="${y + 4}">${v}</text>`;
}
data.forEach((row, i) => {
    const x = 61 + i * 22.9;
    let y = base;
    chart += '<g class="bar">';
    (bars[row[0]] || []).forEach((value, s) => {
        const h = value * scale;
        y -= h;
        if (h) {
            chart += `<rect x="${x - 4.5}" y="${y}" width="9" height="${h}" fill="url(#s${s})"/>`;
        }
    });
    chart += `</g><text class="axis-x" x="${x}" y="359">${row[0]}</text>`;
});
fields.slice(2, 5).forEach((name, i) => {
    const x = 127 + i * 157;
    chart += `<rect x="${x}" y="379" width="6" height="6" fill="url(#s${i})"/>`;
    chart += `<text x="${x + 9}" y="386">${name}</text>`;
});
document.getElementById('chart').insertAdjacentHTML('beforeend', chart);
```
